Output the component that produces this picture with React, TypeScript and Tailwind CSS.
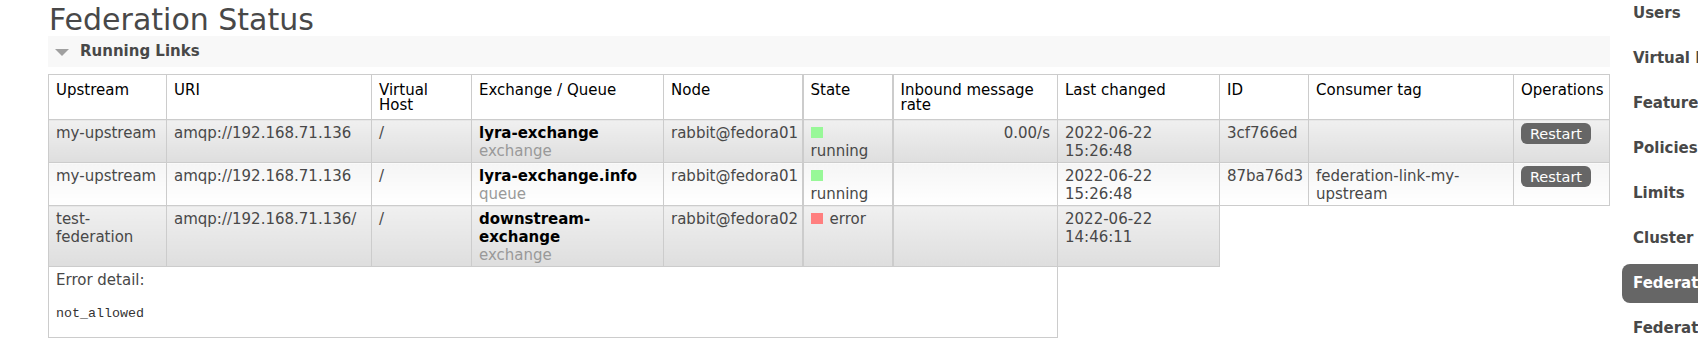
import React from "react";

type Link = {
  upstream: string;
  uri: string;
  vhost: string;
  name: string;
  kind: string;
  node: string;
  state: "running" | "error";
  rate?: string;
  changed: [string, string];
  id?: string;
  tag?: string;
};

const links: Link[] = [
  {
    upstream: "my-upstream",
    uri: "amqp://192.168.71.136",
    vhost: "/",
    name: "lyra-exchange",
    kind: "exchange",
    node: "rabbit@fedora01",
    state: "running",
    rate: "0.00/s",
    changed: ["2022-06-22", "15:26:48"],
    id: "3cf766ed",
    tag: "",
  },
  {
    upstream: "my-upstream",
    uri: "amqp://192.168.71.136",
    vhost: "/",
    name: "lyra-exchange.info",
    kind: "queue",
    node: "rabbit@fedora01",
    state: "running",
    rate: "",
    changed: ["2022-06-22", "15:26:48"],
    id: "87ba76d3",
    tag: "federation-link-my-upstream",
  },
  {
    upstream: "test-federation",
    uri: "amqp://192.168.71.136/",
    vhost: "/",
    name: "downstream-exchange",
    kind: "exchange",
    node: "rabbit@fedora02",
    state: "error",
    changed: ["2022-06-22", "14:46:11"],
  },
];

const navItems = [
  "Users",
  "Virtual Hosts",
  "Feature Flags",
  "Policies",
  "Limits",
  "Cluster",
  "Federation Status",
  "Federation Upstreams",
];

const th = "border border-[#ccc] bg-white px-[7px] pt-2 pb-1.5 text-left align-top font-normal leading-[15px] text-black";
const td = "border border-[#ccc] px-[7px] pt-1 pb-[2px] align-top leading-[18px]";
const alt1 = "bg-linear-to-b from-[#f0f0f0] to-[#dedede]";
const alt2 = "bg-linear-to-b from-[#f5f5f5] to-white";

function StateCell({ state }: { state: Link["state"] }) {
  if (state === "running") {
    return (
      <>
        <span className="inline-block h-[11px] w-3 bg-[#98f898]" />
        <br />
        running
      </>
    );
  }
  return (
    <>
      <span className="mr-[7px] inline-block h-[11px] w-3 bg-[#ff7f7f]" />
      error
    </>
  );
}

function LinkRow({ link, alt }: { link: Link; alt: string }) {
  const cell = `${td} ${alt}`;
  const isError = link.state === "error";
  return (
    <tr>
      <td className={cell}>{link.upstream}</td>
      <td className={cell}>{link.uri}</td>
      <td className={cell}>{link.vhost}</td>
      <td className={cell}>
        <div className="font-bold text-black">{link.name}</div>
        <div className="text-[#999]">{link.kind}</div>
      </td>
      <td className={cell}>{link.node}</td>
      <td className={`${cell} border-x-2`}>
        <StateCell state={link.state} />
      </td>
      <td className={`${cell} text-right`}>{link.rate}</td>
      <td className={cell}>
        {link.changed[0]}
        <br />
        {link.changed[1]}
      </td>
      {!isError && (
        <>
          <td className={cell}>{link.id}</td>
          <td className={cell}>{link.tag}</td>
          <td className={cell}>
            <button className="-mt-px flex h-[21px] w-[70px] items-center justify-center rounded-[6px] bg-[#666] text-[14.5px] text-white">
              Restart
            </button>
          </td>
        </>
      )}
    </tr>
  );
}

export default function App() {
  return (
    <div className="flex h-[357px] w-[1698px] overflow-hidden bg-white font-['DejaVu_Sans',sans-serif] text-[15px] text-[#484848]">
      <main className="w-[1622px] shrink-0 pl-[48px]">
        <h1 className="h-9 pl-px text-[30px] leading-[40px] font-normal text-[#484848]">Federation Status</h1>
        <div className="w-[1562px]">
          <div className="flex h-[31px] items-center gap-[11px] bg-[#f8f8f8] pl-[7px]">
            <svg width="14" height="7" viewBox="0 0 14 7" className="mt-[2px]">
              <polygon points="0,0 14,0 7,7" fill="#a0a0a0" />
            </svg>
            <h2 className="text-[15px] leading-[15px] font-bold text-[#484848]">Running Links</h2>
          </div>

          <table className="mt-[7px] w-[1562px] table-fixed border-collapse">
            <colgroup>
              <col className="w-[118px]" />
              <col className="w-[205px]" />
              <col className="w-[100px]" />
              <col className="w-[192px]" />
              <col className="w-[139px]" />
              <col className="w-[90px]" />
              <col className="w-[165px]" />
              <col className="w-[162px]" />
              <col className="w-[89px]" />
              <col className="w-[205px]" />
              <col className="w-[96px]" />
            </colgroup>
            <thead>
              <tr>
                <th className={th}>Upstream</th>
                <th className={th}>URI</th>
                <th className={th}>Virtual Host</th>
                <th className={th}>Exchange / Queue</th>
                <th className={th}>Node</th>
                <th className={`${th} border-x-2`}>State</th>
                <th className={th}>Inbound message rate</th>
                <th className={th}>Last changed</th>
                <th className={th}>ID</th>
                <th className={th}>Consumer tag</th>
                <th className={th}>Operations</th>
              </tr>
            </thead>
            <tbody>
              <LinkRow link={links[0]} alt={alt1} />
              <LinkRow link={links[1]} alt={alt2} />
              <LinkRow link={links[2]} alt={alt1} />
              <tr>
                <td colSpan={7} className="border border-[#ccc] bg-white px-[7px] pt-1 pb-[14px] align-top leading-[18px]">
                  <div>Error detail:</div>
                  <pre className="mt-4 font-['Liberation_Mono',monospace] text-[13.33px] leading-[18px] text-[#333]">not_allowed</pre>
                </td>
              </tr>
            </tbody>
          </table>
        </div>
      </main>

      <nav className="-mt-1.5 flex w-[76px] shrink-0 flex-col gap-1.5">
        {navItems.map((item) => (
          <div
            key={item}
            className={
              item === "Federation Status"
                ? "h-[39px] rounded-l-[8px] bg-[#666] pl-[11px] text-[15px] leading-[39px] font-bold whitespace-nowrap text-white"
                : "h-[39px] pl-[11px] text-[15px] leading-[39px] font-bold whitespace-nowrap text-[#484848]"
            }
          >
            {item}
          </div>
        ))}
      </nav>
    </div>
  );
}
